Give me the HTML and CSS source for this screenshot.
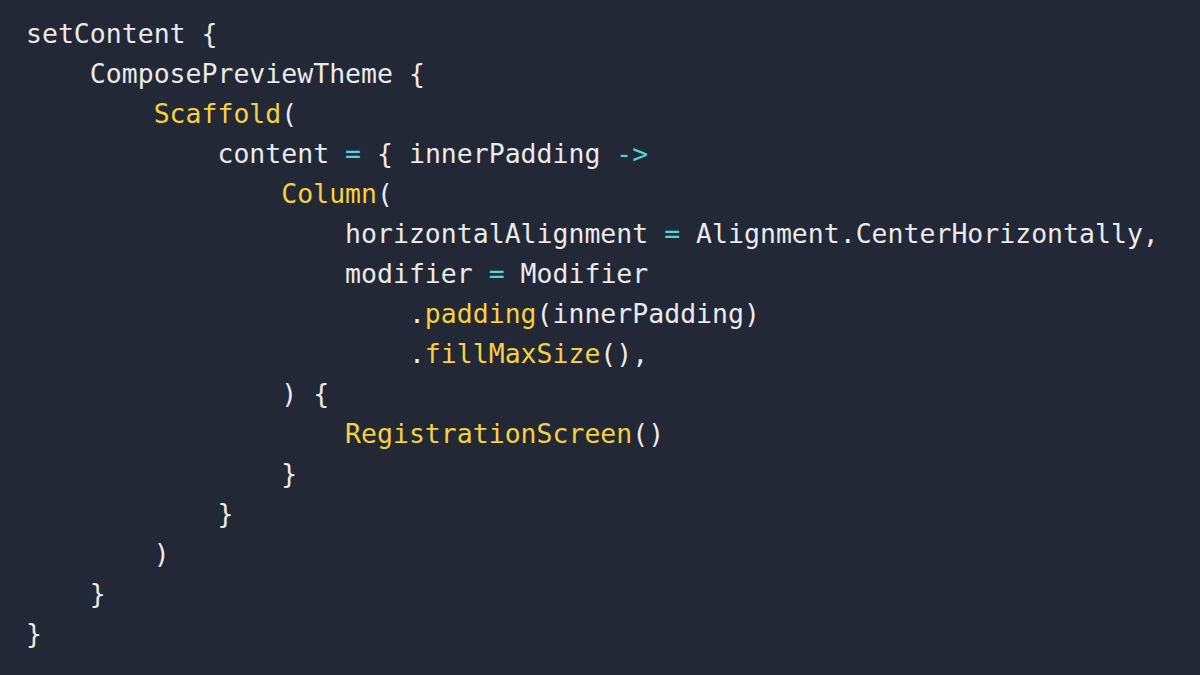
FILE: index.html
```html
<!DOCTYPE html>
<html>
<head>
<meta charset="utf-8">
<link rel="stylesheet" href="styles.css">
</head>
<body>
<pre class="code"><span class="line">setContent {</span>
<span class="line">    ComposePreviewTheme {</span>
<span class="line">        <span class="fn">Scaffold</span>(</span>
<span class="line">            content <span class="op">=</span> { innerPadding <span class="op">-&gt;</span></span>
<span class="line">                <span class="fn">Column</span>(</span>
<span class="line">                    horizontalAlignment <span class="op">=</span> Alignment.CenterHorizontally,</span>
<span class="line">                    modifier <span class="op">=</span> Modifier</span>
<span class="line">                        .<span class="fn">padding</span>(innerPadding)</span>
<span class="line">                        .<span class="fn">fillMaxSize</span>(),</span>
<span class="line">                ) {</span>
<span class="line">                    <span class="fn">RegistrationScreen</span>()</span>
<span class="line">                }</span>
<span class="line">            }</span>
<span class="line">        )</span>
<span class="line">    }</span>
<span class="line">}</span></pre>
</body>
</html>
```
FILE: styles.css
```css
html, body {
  margin: 0;
  padding: 0;
  background: #222835;
  width: 1200px;
  height: 675px;
  overflow: hidden;
}
.code {
  margin: 0;
  padding: 14px 0 0 26px;
  font-family: "DejaVu Sans Mono", "Liberation Mono", monospace;
  font-size: 26.5px;
  line-height: 40px;
  color: #eaeaec;
  white-space: pre;
}
.fn {
  color: #f5d13f;
}
.op {
  color: #4fd6d9;
}
```
